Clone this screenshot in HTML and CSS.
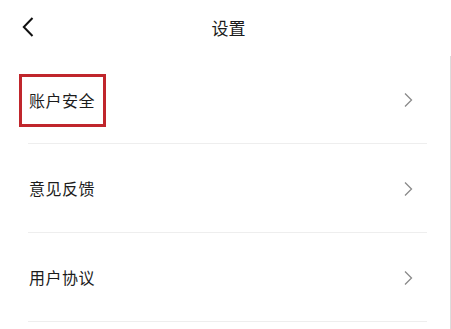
FILE: index.html
```html
<!DOCTYPE html>
<html lang="zh-CN">
<head>
<meta charset="utf-8">
<link rel="stylesheet" href="styles.css">
</head>
<body>
<div class="page">
  <header class="topbar">
    <span class="back">
      <svg width="12" height="20" viewBox="0 0 12 20"><path d="M10.5 1 L1.8 10 L10.5 19" fill="none" stroke="#111" stroke-width="2" stroke-linejoin="miter"/></svg>
    </span>
    <h1 class="title">设置</h1>
  </header>
  <ul class="list">
    <li class="row">
      <span class="label marked">账户安全</span>
      <svg class="chev" width="9" height="16" viewBox="0 0 9 16"><path d="M1 1.5 L7.5 8 L1 14.5" fill="none" stroke="#8a8a8a" stroke-width="1.3"/></svg>
    </li>
    <li class="row">
      <span class="label">意见反馈</span>
      <svg class="chev" width="9" height="16" viewBox="0 0 9 16"><path d="M1 1.5 L7.5 8 L1 14.5" fill="none" stroke="#8a8a8a" stroke-width="1.3"/></svg>
    </li>
    <li class="row">
      <span class="label">用户协议</span>
      <svg class="chev" width="9" height="16" viewBox="0 0 9 16"><path d="M1 1.5 L7.5 8 L1 14.5" fill="none" stroke="#8a8a8a" stroke-width="1.3"/></svg>
    </li>
  </ul>
</div>
</body>
</html>
```
FILE: styles.css
```css
* { box-sizing: border-box; }
html, body {
  margin: 0;
  padding: 0;
  background: #fff;
}
body {
  font-family: "Noto Sans CJK SC", "Noto Sans", sans-serif;
  color: #1c1c1c;
  width: 451px;
  height: 329px;
  overflow: hidden;
}
.page {
  width: 451px;
  height: 329px;
  display: flex;
  flex-direction: column;
}
.topbar {
  height: 56px;
  display: flex;
  align-items: center;
  position: relative;
  padding-left: 22px;
  padding-bottom: 2px;
}
.back {
  display: flex;
  align-items: center;
}
.back svg { display: block; }
.title {
  position: absolute;
  left: 0;
  right: 0;
  top: 16px;
  margin: 0;
  text-align: center;
  font-size: 17px;
  font-weight: 400;
  line-height: 24px;
  padding-left: 6px;
  color: #1a1a1a;
}
.list {
  list-style: none;
  margin: 0;
  padding: 0;
  flex: 1;
  border-right: 1px solid #dcdcdc;
}
.row {
  height: 89px;
  margin-left: 28px;
  margin-right: 23px;
  border-bottom: 1px solid #eeeeee;
  display: flex;
  align-items: center;
  justify-content: space-between;
  padding-left: 1px;
  padding-right: 14px;
}
.row:first-child { height: 88px; }
.label {
  font-size: 16px;
  line-height: 22px;
  letter-spacing: 0.5px;
  color: #1c1c1c;
}
.label.marked {
  outline: 3px solid #c0262c;
  outline-offset: 0;
  padding: 12px 8px 13px 7px;
  margin-left: -7px;
  margin-top: 1px;
}
.chev { display: block; margin-top: 1px; }
```
